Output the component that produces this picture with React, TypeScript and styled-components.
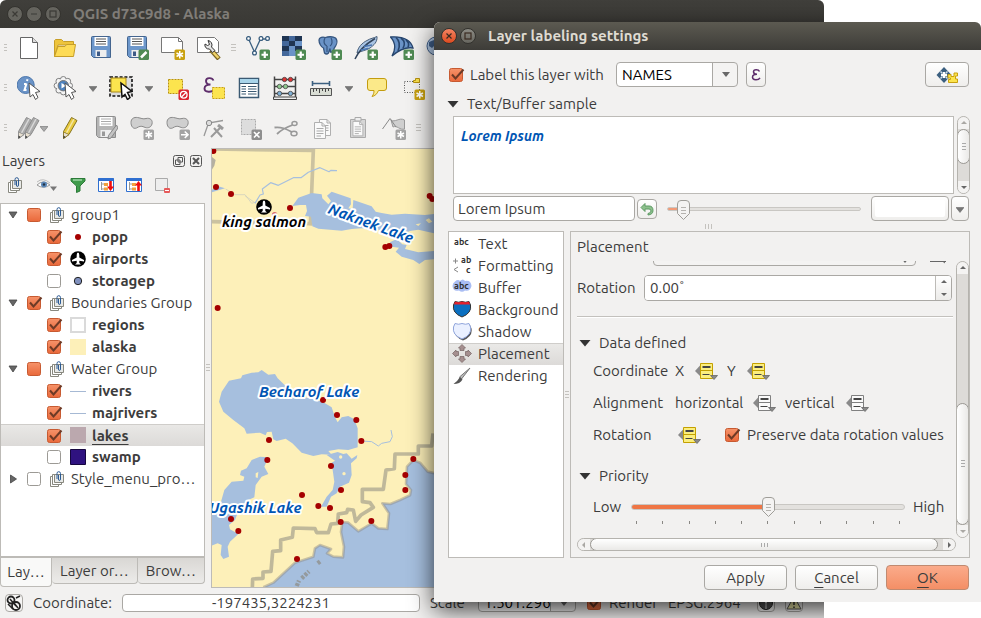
import React from "react";
import styled, { createGlobalStyle, css } from "styled-components";

const svgUrl = (body: string, w: number, h: number) =>
  `url("data:image/svg+xml,${encodeURIComponent(
    `<svg xmlns='http://www.w3.org/2000/svg' width='${w}' height='${h}' viewBox='0 0 ${w} ${h}'>${body}</svg>`
  )}")`;

const boxGradient =
  "<defs><linearGradient id='g' x2='0' y2='1'><stop offset='0' stop-color='#f6936a'/><stop offset='1' stop-color='#e9683a'/></linearGradient></defs>";
const filledBox = `${boxGradient}<rect x='1.5' y='1.5' width='13' height='13' rx='2' fill='url(#g)' stroke='#c75a31'/>`;
const emptyBox = "<rect x='1.5' y='1.5' width='13' height='13' rx='2' fill='#fff' stroke='#9c9a95'/>";
const tick = "<path d='M4 7.500 7.500 11.500 15.500 2.500' fill='none' stroke='#6d3a26' stroke-width='2'/>";
const IMG_CHECKED = svgUrl(filledBox + tick, 17, 16);
const IMG_PARTIAL = svgUrl(filledBox, 17, 16);
const IMG_EMPTY = svgUrl(emptyBox, 17, 16);
const IMG_ARROW = svgUrl("<path d='M0 0H8L4 5Z' fill='#686868'/>", 8, 5);
const IMG_THUMB = svgUrl(
  "<path d='M.5 4Q.5 .5 4 .5H9Q12.500 .5 12.500 4V13.500L6.500 19.500L.5 13.500Z' fill='#f4f3f2' stroke='#9f9d98'/><path d='M4 7.500H9M4 10.500H9M4 13.500H9' stroke='#b5b3af'/>",
  13,
  20
);

const Global = createGlobalStyle`
  * { box-sizing: border-box; }
  html, body { margin: 0; height: 100%; background: #fff; overflow: hidden; }
  body, button, input, select {
    font: 15px/20px "Ubuntu", "Noto Sans", sans-serif;
    color: #3c3c3c;
  }
  svg { display: block; flex: none; }
`;

/* ---------- windows ---------- */
const Desktop = styled.div`
  position: relative;
  height: 100vh;
  overflow: hidden;
`;
const MainWindow = styled.div`
  position: absolute;
  inset: 0 157px 0 0;
  display: flex;
  flex-direction: column;
  background: #f2f1f0;
  border-radius: 6px 6px 0 0;
  overflow: hidden;
`;
const DialogShade = styled.div`
  position: absolute;
  inset: 22px -157px 16px 434px;
  box-shadow: 0 8px 24px rgba(0, 0, 0, 0.75);
  border-radius: 6px 6px 0 0;
`;
const DialogWindow = styled.section`
  position: absolute;
  inset: 22px 0 16px 434px;
  display: flex;
  flex-direction: column;
  background: #f2f1f0;
  border-radius: 6px 6px 0 0;
  overflow: hidden;
`;
const TitleBar = styled.header<{ $active?: boolean }>`
  flex: none;
  height: 28px;
  display: flex;
  align-items: center;
  gap: 3px;
  padding-left: 7px;
  font-weight: 700;
  white-space: nowrap;
  color: ${(p) => (p.$active ? "#dfdbd2" : "#807d78")};
  background: ${(p) =>
    p.$active ? "linear-gradient(#5c5a51, #3d3c38)" : "linear-gradient(#403f3b, #393834)"};
`;
const WindowButton = styled.button<{ $tone: "close" | "focus" | "idle" }>`
  width: 16px;
  height: 16px;
  padding: 0;
  display: grid;
  place-items: center;
  border: 1px solid #33322e;
  border-radius: 50%;
  color: ${(p) => (p.$tone === "idle" ? "#3b3a36" : "#3a2a20")};
  background: ${(p) =>
    p.$tone === "close"
      ? "linear-gradient(#f48462, #dc4a1f)"
      : p.$tone === "focus"
      ? "linear-gradient(#8c8b84, #67665f)"
      : "#65645e"};
`;
const WindowTitle = styled.h1`
  margin: 0 0 0 9px;
  font-size: 15px;
  line-height: 20px;
`;
const Glyph = ({ kind }: { kind: "x" | "min" | "max" }) => (
  <svg width="8" height="8" viewBox="0 0 8 8" fill="none" stroke="currentColor" strokeWidth="1.2">
    {kind === "x" && <path d="M1.500 1.500 6.500 6.500M6.500 1.500 1.500 6.500" />}
    {kind === "min" && <path d="M1 4H7" />}
    {kind === "max" && <rect x="1" y="1" width="6" height="6" />}
  </svg>
);

/* ---------- toolbars ---------- */
const ToolRow = styled.div`
  flex: none;
  height: 40px;
  display: flex;
  align-items: center;
`;
const Grip = styled.span<{ $wide?: boolean }>`
  flex: none;
  width: ${(p) => (p.$wide ? 13 : 11)}px;
  height: 8px;
  padding: 0 4px;
  background: repeating-linear-gradient(#c4c2be 0 1px, #f2f1f0 1px 3px) content-box;
`;
const ToolButton = styled.button<{ $size?: "normal" | "split" | "arrow" }>`
  flex: none;
  width: ${(p) => (p.$size === "split" ? 41 : p.$size === "arrow" ? 20 : 36)}px;
  height: 36px;
  padding: 0;
  display: flex;
  align-items: center;
  justify-content: center;
  border: 0;
  background: none;
`;
const Ico = ({ children, size = 24 }: { children: React.ReactNode; size?: number }) => (
  <svg width={size} height={size} viewBox={`0 0 ${size} ${size}`} fill="none">
    {children}
  </svg>
);
const DownArrow = ({ color = "#777" }: { color?: string }) => (
  <svg width="8" height="8" viewBox="0 0 8 8">
    <path d="M0 2.500H8L4 7.500Z" fill={color} stroke="#5c5c5c" strokeWidth=".5" />
  </svg>
);
const Cursor = ({ dark }: { dark?: boolean }) => (
  <path
    d="M12 7 23 15.500 18.500 16.500 21 21.500 18.500 23.500 16 18.500 13 21Z"
    fill="#fff"
    stroke={dark ? "#111" : "#555"}
    strokeWidth={dark ? 1.5 : 1}
  />
);
const Badge = ({ kind, color }: { kind: "plus" | "star" | "x" | "edit" | "arrow" | "no"; color: string }) => (
  <g>
    <rect x="13.500" y="13.500" width="10.500" height="10.500" rx="1.500" fill={color} />
    <g stroke="#fff" strokeWidth="1.600">
      {kind === "plus" && <path d="M18.750 15.500V22M15.500 18.750H22" strokeWidth="2.200" />}
      {kind === "star" && (
        <path d="M18.750 15V22.500M15.500 17 22 20.500M22 17 15.500 20.500" strokeWidth="1.500" />
      )}
      {kind === "x" && <path d="M16 16 21.500 21.500M21.500 16 16 21.500" />}
      {kind === "edit" && <path d="M16 21.500 21.500 16" strokeWidth="2.500" />}
      {kind === "arrow" && <path d="M15 18.750H21.500M18.750 15.500 22 18.750 18.750 22" />}
      {kind === "no" && (
        <>
          <circle cx="18.750" cy="18.750" r="3.300" strokeWidth="1.300" />
          <path d="M16.500 21 21 16.500" strokeWidth="1.300" />
        </>
      )}
    </g>
  </g>
);
const GREEN = "#4f8a53";
const GOLD = "#c9a10f";
const GREY = "#a3a3a3";
const Floppy = ({ grey }: { grey?: boolean }) => (
  <g>
    <path
      d="M2.500 1.500Q2.500.5 3.500.5H20.500Q21.500.5 21.500 1.500V21.500H4.500L2.500 19.500Z"
      fill={grey ? "#b5b5b5" : "#6d97cb"}
      stroke={grey ? "#8e8e8e" : "#44658f"}
    />
    <path d="M5.500 1H18.500V10H5.500Z" fill="#fff" />
    <path d="M7 3H17M7 5.500H17M7 8H17" stroke={grey ? "#aaa" : "#555"} />
    <path d="M6.500 14H17.500V21H6.500Z" fill="#eee" />
    <path d="M8 15.500H11V20H8Z" fill={grey ? "#999" : "#3d5a86"} />
  </g>
);
const Blob = () => (
  <path
    d="M1 6.500C1 2.500 4 1 7.500 1.500C11 2 13 3.500 16 2.500C20 1.500 23 4 22 8C21 12 17 12.500 14 11C11 9.500 9 10.500 6.500 12C3 13.500 1 10 1 6.500Z"
    fill="#cfcfcf"
    stroke="#8a8a8a"
  />
);
const Pencil = ({ fill, edge, dx = 0 }: { fill: string; edge: string; dx?: number }) => (
  <g transform={`translate(${dx} 0)`}>
    <path d="M13.500 1.500 19 4.500 11 18.500 5.500 22.500 5.500 15.500Z" fill={fill} stroke={edge} />
    <path d="M16 3 8.500 17" stroke="#fff" strokeOpacity=".55" strokeWidth="1.500" />
    <path d="M5.500 16 11 18.500 5.500 22.500Z" fill="#e8e0d0" stroke={edge} strokeWidth=".8" />
    <path d="M5.500 19.500 7.500 21 5.500 22.500Z" fill="#333" />
  </g>
);
const Sheet = ({ x = 0, y = 0 }: { x?: number; y?: number }) => (
  <g transform={`translate(${x} ${y})`}>
    <path d="M.5.5H8L11.500 4V16.500H.5Z" fill="#fafafa" stroke="#b0b0b0" />
    <path d="M8 .5V4H11.500M2.500 6.500H9.500M2.500 9H9.500M2.500 11.500H9.500M2.500 14H7" stroke="#aaa" />
  </g>
);

type Tool = { name: string; art: React.ReactNode };
const row1a: Tool[] = [
  { name: "New", art: <><path d="M3.500 1.500H15.500L20.500 6.500V22.500H3.500Z" fill="#fff" stroke="#666" /><path d="M15.500 1.500V6.500H20.500" fill="#ddd" stroke="#666" /></> },
  { name: "Open", art: <><path d="M1.500 20.500V4.500L2.500 3.500H8.500L10.500 5.500H20.500V9H5Z" fill="#eec43c" stroke="#c79e28" /><path d="M1.500 20.500 5 10.500H12L13.500 8.500H22.500L20.500 20.500Z" fill="#fddb56" stroke="#c79e28" /></> },
  { name: "Save", art: <Floppy /> },
  { name: "Save As", art: <><Floppy /><Badge kind="edit" color={GREEN} /></> },
  { name: "New Print Composer", art: <><path d="M.5 1.500H17.500L21.500 5.500V16.500H.5Z" fill="#fff" stroke="#777" /><path d="M17.500 1.500V5.500H21.500" stroke="#777" /><Badge kind="star" color={GOLD} /></> },
  { name: "Composer Manager", art: <><path d="M.5 1.500H17.500L21.500 5.500V16.500H.5Z" fill="#fff" stroke="#777" /><path d="M14 14 22 23" stroke="#7a6420" strokeWidth="4.500" /><path d="M15 15 21.500 22" stroke="#f0d268" strokeWidth="2.500" /><path d="M8 8A4 4 0 0 0 12.500 13L15.500 16.500L18 14.500L14.500 11A4.500 4.500 0 0 0 11 4.500L12.500 8.500L10.500 9.500Z" fill="#e5e5e5" stroke="#333" /></> },
];
const row1b: Tool[] = [
  { name: "Add Vector Layer", art: <><path d="M3 4 8.500 16 14.500 3H21" stroke="#3c6080" strokeWidth="1.300" />{[[2.500, 2.500], [8.500, 17], [15, 2.500], [21.500, 2.500]].map(([x, y]) => <circle key={x} cx={x} cy={y} r="1.900" fill="#fff" stroke="#3c6080" strokeWidth="1.300" />)}<Badge kind="plus" color={GREEN} /></> },
  { name: "Add Raster Layer", art: <><path d="M0 0H20V20H0Z" fill="#6a93c7" /><path d="M0 0H7V5H0ZM13 0H20V5H13ZM7 5H13V10H7ZM0 10H7V15H0ZM13 10H20V15H13Z" fill="#1f3553" /><path d="M7 0H13V5H7ZM0 5H7V10H0ZM0 15H7V20H0Z" fill="#44689b" /><Badge kind="plus" color={GREEN} /></> },
  { name: "Add PostGIS Layer", art: <><path d="M1 4C1 1 5 .7 7.500 1.500C10 .5 15 .3 17.500 2C20.500 5 18 10 16 12.500L15.500 16H12.500L12 12.500L10.500 17Q8.500 19 6.500 17L5.500 12C3 11 1 7 1 4Z" fill="#6a93c7" stroke="#35557f" strokeWidth="1.300" /><path d="M7 2C5 5 6 9 9 10M13 2C15 5 14 9 12 10M9 10V16" stroke="#35557f" strokeWidth="1.200" /><Badge kind="plus" color={GREEN} /></> },
  { name: "Add SpatiaLite Layer", art: <><path d="M3 17C4 11 8 7 13 4.500C16 2.500 20 2 23 .5C23.500 6 20 9 16 12C12 14.500 7 15 3 17Z" fill="#a9c4e4" stroke="#4a5f78" /><path d="M1 23C5 14 12 8 21 2.500" stroke="#31445c" strokeWidth="1.500" /><path d="M7 14 14 12.500M10 10.500 18 9" stroke="#4a77b4" strokeWidth="1.500" /><Badge kind="plus" color={GREEN} /></> },
  { name: "Add MSSQL Layer", art: <><path d="M.5 1C8 .5 20 1 23 12C17 11 9 14 2 20C6 13 6 7 .5 1Z" fill="#6a93c7" stroke="#27456d" strokeWidth="1.300" /><path d="M6 1.500C10 5 10 10 8 15M11 2C15 5 15 9 13 12.500M16 4C19 6 19 9 18 11.500" stroke="#27456d" strokeWidth="1.600" /><Badge kind="plus" color={GREEN} /></> },
  { name: "Add WMS Layer", art: <><circle cx="10" cy="10" r="9" fill="#b3cbe8" stroke="#41618c" /><path d="M3 6 8 4 10 8 6 12 3 10ZM12 12 16 10 15 16Z" fill="#41618c" /></> },
];
const gearLobes = Array.from({ length: 8 }, (_, i) => {
  const a = (i * Math.PI) / 4;
  return { x: 10.3 + 6.3 * Math.cos(a), y: 9.7 + 6.3 * Math.sin(a) };
});
const identify: Tool = { name: "Identify Features", art: <><circle cx="8.700" cy="9" r="8.500" fill="#6a93c7" stroke="#4e78ad" /><path d="M10.500 3.200 10 5M9.500 7.500 7.500 14H9.500M7 8H9.500" stroke="#fff" strokeWidth="2" /><Cursor /></> };
const runAction: Tool = { name: "Run Feature Action", art: <>{gearLobes.map((l, i) => <circle key={i} cx={l.x} cy={l.y} r="2.900" fill="#f4f4f4" stroke="#808080" />)}<circle cx="10.300" cy="9.700" r="7" fill="#f4f4f4" /><circle cx="10.300" cy="9.700" r="5.200" fill="#4e82bd" stroke="#777" /><path d="M8.500 7 13 9.700 8.500 12.500Z" fill="#fff" /><Cursor /></> };
const select: Tool = { name: "Select Features", art: <><path d="M1 1H23V20H1Z" fill="#ddd" stroke="#111" strokeWidth="1.600" strokeDasharray="3 1.800" /><path d="M2 2H17V16H2Z" fill="#fce44e" stroke="#a9891a" /><Cursor dark /></> };
const row2: Tool[] = [
  { name: "Deselect Features", art: <><path d="M3.500 3.500H17.500V17.500H3.500Z" fill="#fce44e" stroke="#b8920e" strokeDasharray="2 1" /><Badge kind="no" color="#d8232f" /></> },
  { name: "Select by Expression", art: <><path d="M12.500 4.500C11 1 5 1.500 5 5C5 7.500 7 8.500 9.500 8.500C6 8.500 3.500 10 3.500 12.500C3.500 16.500 11 17 13.500 13" stroke="#5e2d6b" strokeWidth="1.900" /><path d="M11.500 11.500H23.500V22.500H11.500Z" fill="#fce44e" stroke="#c9a10f" strokeDasharray="2 1" /></> },
  { name: "Open Attribute Table", art: <><path d="M2.500 2.500H21.500V21.500H2.500Z" fill="#fff" stroke="#3b5a73" strokeWidth="1.500" /><path d="M3 3H21V7H3Z" fill="#a8d4ea" /><path d="M3 7.500H21" stroke="#3b5a73" /><path d="M4.500 10.500H9M11 10.500H19.500M4.500 13H9M11 13H19.500M4.500 15.500H9M11 15.500H19.500M4.500 18H9M11 18H19.500" stroke="#3b5a73" strokeWidth="1.200" /></> },
  { name: "Field Calculator", art: <><path d="M1.500 .5V21M22.500 .5V21M1 3.500H23M1 10.500H23M1 17.500H23" stroke="#444" strokeWidth="1.500" /><path d="M.5 21H23.500V23.500H.5Z" fill="#eee" stroke="#444" />{[[11.500, 3.500, "#d33"], [17.500, 3.500, "#d33"], [6.500, 10.500, "#8fca8f"], [12.500, 10.500, "#8fca8f"], [6.500, 17.500, "#7fb0d6"], [17.500, 17.500, "#7fb0d6"]].map(([x, y, c]) => <circle key={`${x}-${y}`} cx={x} cy={y} r="2.200" fill={String(c)} stroke="#444" strokeWidth=".8" />)}</> },
  { name: "Measure Line", art: <><path d="M3.500 5V10M20.500 5V10M3.500 7.500H20.500" stroke="#3c6080" strokeWidth="1.600" /><path d="M1.500 12.500H22.500V19.500H1.500Z" fill="#d9ddd4" stroke="#555" /><path d="M4.500 13V16M7.500 13V15M10.500 13V17M13.500 13V15M16.500 13V16M19.500 13V15" stroke="#444" /></> },
];
const row2b: Tool[] = [
  { name: "Map Tips", art: <path d="M5 2.500H19Q21.500 2.500 21.500 5V12Q21.500 14.500 19 14.500H13.500C12 18 10 20 7 20.500C8.500 18.500 9 17 9 14.500H5Q2.500 14.500 2.500 12V5Q2.500 2.500 5 2.500Z" fill="#fbe989" stroke="#c39c0e" /> },
  { name: "Text Annotation", art: <><path d="M3.500 5.500H18.500V16.500H3.500Z" stroke="#555" strokeDasharray="1 1.500" /><path d="M12.500 4.500H14.500V2.500H18.500V6.500H12.500Z" fill="#fce44e" stroke="#b8920e" /><Badge kind="star" color={GOLD} /></> },
];
const row3: Tool[] = [
  { name: "Toggle Editing", art: <Pencil fill="#e7c93d" edge="#86731f" /> },
  { name: "Save Layer Edits", art: <><Floppy grey /><path d="M22.500 9 24 12 17 22 14 23 14.500 19.500Z" fill="#c4c4c4" stroke="#888" /></> },
  { name: "Add Feature", art: <><Blob /><Badge kind="star" color={GREY} /></> },
  { name: "Move Feature", art: <><Blob /><Badge kind="arrow" color={GREY} /></> },
  { name: "Node Tool", art: <><path d="M2 20 6.500 7 21 4.500" stroke="#999" strokeWidth="1.300" /><circle cx="7" cy="7" r="2.700" fill="#ddd" stroke="#888" /><path d="M12 12 20 21M18 12 9 21" stroke="#9a9a9a" strokeWidth="2" /><path d="M16 9 21 13" stroke="#9a9a9a" strokeWidth="3" /></> },
  { name: "Delete Selected", art: <><path d="M3.500 3.500H17.500V18.500H3.500Z" fill="#ddd" stroke="#aaa" strokeDasharray="2 1" /><Badge kind="x" color="#8f8f8f" /></> },
  { name: "Cut Features", art: <><path d="M.5 11.500C7 10.500 12 13 18 16M3 18C8 13 13 11 18.500 9" stroke="#999" strokeWidth="1.800" /><ellipse cx="20.500" cy="7.500" rx="2.500" ry="2" stroke="#999" strokeWidth="1.500" /><ellipse cx="20" cy="17.500" rx="3" ry="2.300" stroke="#999" strokeWidth="1.500" /></> },
  { name: "Copy Features", art: <><Sheet x={9} y={3} /><Sheet x={4} y={6} /></> },
  { name: "Paste Features", art: <><path d="M4.500 3.500H19.500V21.500H4.500Z" fill="#d6d6d6" stroke="#aaa" /><path d="M9 1.500H15V5H9Z" fill="#eee" stroke="#aaa" /><g transform="translate(6.500 5) scale(.9)"><Sheet /></g></> },
  { name: "Advanced Digitizing", art: <><path d="M9 4C13 7 17 1 22.500 4V13C18 14.500 15 9 11 11Z" fill="#cfcfcf" stroke="#999" /><path d="M.5 13 8 2.500 14 11" stroke="#888" /><Badge kind="star" color={GREY} /></> },
];
const Tools = ({ items }: { items: Tool[] }) => (
  <>
    {items.map((t) => (
      <ToolButton key={t.name} aria-label={t.name}>
        <Ico>{t.art}</Ico>
      </ToolButton>
    ))}
  </>
);
const MenuArrow = ({ label }: { label: string }) => (
  <ToolButton $size="arrow" aria-label={label}>
    <DownArrow />
  </ToolButton>
);

/* ---------- layer dock ---------- */
const Workspace = styled.div`
  flex: 1;
  min-height: 0;
  display: flex;
`;
const Dock = styled.aside`
  flex: none;
  width: 205px;
  display: flex;
  flex-direction: column;
`;
const DockTitle = styled.div`
  height: 25px;
  display: flex;
  align-items: center;
  gap: 5px;
  padding: 0 3px 0 2px;
`;
const DockName = styled.h2`
  flex: 1;
  margin: 0;
  font-size: 15px;
  font-weight: 400;
`;
const TinyButton = styled.button`
  width: 12px;
  height: 12px;
  padding: 0;
  border: 0;
  background: none;
`;
const DockTools = styled.div`
  height: 30px;
  display: flex;
  align-items: flex-start;
  padding: 2px 0 0 1px;
`;
const DockTool = styled.button<{ $menu?: boolean }>`
  width: ${(p) => (p.$menu ? 35 : 28)}px;
  height: 20px;
  padding: 0;
  display: flex;
  align-items: center;
  justify-content: center;
  border: 0;
  background: none;
`;
const Tree = styled.ul`
  flex: 1;
  margin: 0;
  padding: 0;
  list-style: none;
  background: #fff;
  border: 1px solid #bdbbb7;
  border-bottom-width: 2px;
`;
const TreeRow = styled.li<{ $child?: boolean; $current?: boolean }>`
  height: 22px;
  display: flex;
  align-items: center;
  gap: 6px;
  padding-left: ${(p) => (p.$child ? 45 : 5)}px;
  font-weight: ${(p) => (p.$child ? 700 : 400)};
  white-space: nowrap;
  ${(p) =>
    p.$current &&
    css`
      background: linear-gradient(#e9e8e6, #dcdad8);
      border-top: 1px solid #cfcdca;
      text-decoration: underline;
      text-underline-offset: 3px;
    `}
`;
const Expander = styled.button`
  width: 14px;
  height: 14px;
  padding: 0;
  display: grid;
  place-items: center;
  border: 0;
  background: none;
`;
const CheckLabel = styled.label`
  display: flex;
  align-items: center;
  gap: 6px;
`;
const Check = styled.input.attrs({ type: "checkbox" })<{ $partial?: boolean }>`
  appearance: none;
  flex: none;
  width: 17px;
  height: 16px;
  margin: 0;
  background: ${(p) => (p.$partial ? IMG_PARTIAL : IMG_EMPTY)} no-repeat;
  &:checked {
    background-image: ${IMG_CHECKED};
  }
`;
const GroupIcon = () => (
  <Ico size={16}>
    <path d="M1.500 5.500H9.500V15.500H1.500Z" fill="#fff" stroke="#88887f" />
    <path d="M3.500 3.500H12.500V13.500H3.500Z" fill="#fff" stroke="#88887f" />
    <path d="M5.500 3.500H14.500V11.500H5.500Z" fill="#e8e9e6" stroke="#88887f" />
    <path d="M8 8V2.500Q8 .7 9.700 .7Q11.500 .7 11.500 2.500V8Q11.500 9.500 10.200 9.500Q9.500 9.500 9.500 8V4" stroke="#2c5b94" />
  </Ico>
);
const AirportArt = () => (
  <>
    <circle cx="8" cy="8" r="7.800" fill="#000" />
    <path d="M8 1.500Q9.300 1.500 9.300 4V6.500L14 9V10.500L9.300 9.800V12L11 13.500H5L6.700 12V9.800L2 10.500V9L6.700 6.500V4Q6.700 1.500 8 1.500Z" fill="#fff" />
  </>
);
type Layer = { label: string; child?: boolean; state: "on" | "off" | "partial"; art?: React.ReactNode; closed?: boolean; current?: boolean };
const layers: Layer[] = [
  { label: "group1", state: "partial" },
  { label: "popp", child: true, state: "on", art: <circle cx="9" cy="8" r="3" fill="#a50000" /> },
  { label: "airports", child: true, state: "on", art: <g transform="translate(1 0)"><AirportArt /></g> },
  { label: "storagep", child: true, state: "off", art: <circle cx="9" cy="8" r="3.700" fill="#8090bd" stroke="#222" /> },
  { label: "Boundaries Group", state: "on" },
  { label: "regions", child: true, state: "on", art: <path d="M2 1H16V15H2Z" fill="#fff" stroke="#dadada" strokeWidth="2" /> },
  { label: "alaska", child: true, state: "on", art: <path d="M1 0H17V16H1Z" fill="#fdf0b9" /> },
  { label: "Water Group", state: "partial" },
  { label: "rivers", child: true, state: "on", art: <path d="M1 8.500H17" stroke="#a6b9d4" /> },
  { label: "majrivers", child: true, state: "on", art: <path d="M1 8.500H17" stroke="#a6b9d4" /> },
  { label: "lakes", child: true, state: "on", current: true, art: <path d="M1 0H17V16H1Z" fill="#bba8ae" /> },
  { label: "swamp", child: true, state: "off", art: <path d="M1.500 .5H16.500V15.500H1.500Z" fill="#2f1280" stroke="#16063f" /> },
  { label: "Style_menu_pro…", state: "off", closed: true },
];
const Tabs = styled.div`
  flex: none;
  height: 30px;
  display: flex;
  align-items: flex-start;
`;
const Tab = styled.button<{ $active?: boolean }>`
  flex: ${(p) => (p.$active ? "0 0 52px" : "1 1 auto")};
  height: ${(p) => (p.$active ? 29 : 26)}px;
  padding: 0 6px;
  border: 1px solid #bdbbb7;
  border-top: 0;
  border-left-width: ${(p) => (p.$active ? 1 : 0)}px;
  border-radius: 0 0 4px 4px;
  background: ${(p) => (p.$active ? "#f9f9f8" : "linear-gradient(#d9d7d4, #ecebe9)")};
  white-space: nowrap;
`;
const SideGrip = styled.div`
  flex: none;
  width: 6px;
  display: grid;
  align-items: center;
  &::before {
    content: "";
    height: 8px;
    margin: 0 1px;
    background: repeating-linear-gradient(#c4c2be 0 1px, transparent 1px 3px);
  }
`;

/* ---------- map ---------- */
const MapView = styled.main`
  flex: 1;
  min-width: 0;
  border: 1px solid #bdbbb7;
  background: #fdf0b9;
  overflow: hidden;
  & > svg {
    width: 100%;
    height: 100%;
  }
`;
const MapLabel = styled.text<{ $black?: boolean }>`
  font: italic 700 15px "Ubuntu", "Noto Sans", sans-serif;
  fill: ${(p) => (p.$black ? "#000" : "#0055b3")};
  stroke: #fff;
  stroke-width: 4px;
  stroke-linejoin: round;
  paint-order: stroke;
`;
const WATER = "#a6bfde";
const LINE = "#8d8a82";
const northDots = [[25, 18], [33, 126], [78, 147], [255, 189], [541, 306], [553, 303], [674, 153], [682, 162], [38, 489]];
const southDots = [[354, 120], [396, 165], [454, 180], [469, 243], [192, 240], [187, 300], [378, 318], [408, 390], [291, 405], [340, 438], [375, 444], [407, 486], [499, 483], [601, 390], [601, 345], [625, 297], [78, 477], [100, 513], [276, 597]];
const Dots = ({ at }: { at: number[][] }) => (
  <>
    {at.map(([x, y]) => (
      <circle key={`${x}-${y}`} cx={x} cy={y} r="9" fill="#a50000" />
    ))}
  </>
);
const COAST =
  "M175 682 205 668 270 608 325 590 330 565 345 555 378 567 366 580 385 590 414 592 417 560 408 516 412 486 430 488 460 514 500 490 520 505 547 507 552 460 532 430 556 432 585 420 615 406 618 390 603 372 606 320 625 300 645 308 668 335 690 340";
const MapArt = () => (
  <svg viewBox="212 149 611 438" preserveAspectRatio="xMinYMin slice" role="img" aria-label="Map of Alaska lakes">
    <g transform="translate(205 145) scale(.33333)">
      <path d="M20 12 325 16 316 242M20 230 320 236" stroke={LINE} strokeOpacity=".45" strokeWidth="11" fill="none" />
      <path d="M20 35 32 45 28 62 20 75Z" fill="#b5b0a0" />
      <path d="M20 135 35 122 60 130 40 136 20 142Z" fill={WATER} />
      <path d="M62 132 90 149 120 149 140 175 150 172M120 152 148 172" stroke="#c8ccc0" strokeWidth="2" fill="none" />
      <path d="M150 175 165 150 175 147 172 132 197 113 220 121 265 98 288 98 310 82 345 68 372 80 378 76 396 77" stroke={WATER} strokeWidth="3.500" fill="none" strokeLinejoin="round" />
      <path d="M262 183 280 158 320 144 350 148 352 160 370 178 378 168 366 152 380 140 437 160 438 178 430 190 443 192 445 165 500 184 512 200 530 204 560 209 600 206 660 210 687 207V265L640 254 615 258 600 265 560 258 470 250 440 252 410 257 340 251 322 244 318 215 300 213 306 198 303 180 285 180Z" fill={WATER} />
      <path d="M555 292 575 282 592 298 605 300 600 312 640 322 687 318V343L660 345 643 357 625 345 590 335 572 320 582 308 560 305Z" fill={WATER} />
      <path d="M632 238 648 235 640 243ZM662 225 672 220 682 230 672 235Z" fill="#fdf0b9" />
      <Dots at={northDots} />
      <circle cx="209" cy="209" r="8" fill="#d8696a" />
    </g>
    <g transform="translate(205 360) scale(.33333)">
      <path d="M42 125 50 95 72 62 108 55 112 46 140 38 160 37 170 30 190 44 210 42 218 55 232 68 262 98 300 112 350 124 380 142 390 172 398 187 410 172 430 168 448 178 458 205 458 262 430 270 400 268 370 273 380 284 350 283 325 288 290 278 262 250 242 236 215 243 205 238 200 215 186 216 182 226 165 218 125 221 118 205 85 180 55 155Z" fill={WATER} />
      <path d="M365 285 398 276 415 282 425 280 440 296 457 285 455 295 438 310 440 345 432 368 405 380 395 400 378 410 365 440 348 440 365 410 383 390 388 365 383 330 380 308 390 302Z" fill={WATER} />
      <circle cx="407" cy="291" r="5" fill="#fdf0b9" />
      <circle cx="417" cy="341" r="5" fill="#fdf0b9" />
      <path d="M105 345 108 332 125 325 140 300 165 290 190 292 178 320 190 342 170 350 152 375 148 412 130 420 105 440 90 480 72 495 75 508 100 522 75 545 68 560 72 590 55 597 47 585 50 555 38 550 20 557V430L48 425 58 390 80 365 115 362 118 350Z" fill={WATER} />
      <path d="M152 340 160 336 158 354 152 352Z" fill="#fdf0b9" />
      <path d="M469 243 500 245 520 258 530 250 555 245 562 230 558 210" stroke={WATER} strokeWidth="3" fill="none" />
      <path d={`${COAST} 1857 340 1857 690 175 690Z`} fill={WATER} />
      <path d={COAST} stroke={LINE} strokeOpacity=".45" strokeWidth="8" fill="none" strokeLinejoin="round" />
      <path d="M275 678 282 662M290 655 312 634M338 610 346 604" stroke={LINE} strokeOpacity=".7" strokeWidth="13" strokeDasharray="9 4" fill="none" />
      <path d="M142 684 143 657 174 655 174 636 198 634 203 574 227 572 227 540 262 532 265 504 330 506 335 518 370 518 378 492 398 490 400 462 425 458 428 448 445 450 452 484 468 465 505 442 495 428 472 425 472 388 535 388 543 330 568 326 570 282 640 282 640 258 680 258 684 220" stroke={LINE} strokeOpacity=".55" strokeWidth="11" fill="none" strokeLinejoin="round" />
      <Dots at={southDots} />
    </g>
    <g transform="translate(256 199)">
      <AirportArt />
    </g>
    <MapLabel $black x="222" y="227">king salmon</MapLabel>
    <MapLabel x="327" y="213" transform="rotate(20 327 213)">Naknek Lake</MapLabel>
    <MapLabel x="259" y="397">Becharof Lake</MapLabel>
    <MapLabel x="209" y="513">Ugashik Lake</MapLabel>
  </svg>
);

/* ---------- status bar ---------- */
const StatusBar = styled.footer`
  flex: none;
  height: 30px;
  display: flex;
  align-items: center;
  gap: 10px;
  padding-left: 5px;
  white-space: nowrap;
`;
const StatusLabel = styled.label`
  flex: none;
  width: 79px;
`;
const ScaleLabel = styled.label`
  flex: none;
  width: 38px;
`;
const StatusButton = styled.button`
  flex: none;
  width: 18px;
  height: 18px;
  padding: 0;
  display: grid;
  place-items: center;
  border: 1px solid #aaa8a4;
  border-radius: 4px;
  background: #f6f5f4;
`;
const field = css`
  border: 1px solid #aaa8a4;
  border-radius: 4px;
  background-color: #fff;
  min-width: 0;
  outline: 0;
`;
const CoordInput = styled.input`
  ${field}
  flex: none;
  width: 298px;
  height: 18px;
  padding: 0;
  text-align: center;
`;
const Combo = styled.select<{ $w: number; $h: number }>`
  ${field}
  appearance: none;
  flex: none;
  width: ${(p) => p.$w}px;
  height: ${(p) => p.$h}px;
  padding: 0 24px 0 5px;
  line-height: ${(p) => p.$h - 2}px;
  color: #000;
  background: ${IMG_ARROW} no-repeat right 7px center,
    linear-gradient(90deg, #aaa8a4 0 1px, #f4f3f2 1px) no-repeat right / 25px 100%, #fff;
`;

/* ---------- dialog ---------- */
const DialogBody = styled.form`
  flex: 1;
  min-height: 0;
  display: flex;
  flex-direction: column;
  padding: 12px 11px 12px 14px;
`;
const TopRow = styled.div`
  display: flex;
  align-items: center;
  height: 25px;
  gap: 8px;
  padding-right: 1px;
`;
const EnableLabel = styled(CheckLabel)`
  width: 160px;
  gap: 5px;
  white-space: nowrap;
`;
const Spacer = styled.span`
  flex: 1;
`;
const PushButton = styled.button<{ $w: number; $h?: number; $primary?: boolean }>`
  flex: none;
  width: ${(p) => p.$w}px;
  height: ${(p) => p.$h ?? 25}px;
  padding: 0;
  display: flex;
  align-items: center;
  justify-content: center;
  border: 1px solid ${(p) => (p.$primary ? "#c08a70" : "#aaa8a4")};
  border-radius: 4px;
  background: ${(p) =>
    p.$primary ? "linear-gradient(#fbab8b, #f48f66)" : "linear-gradient(#fff, #efeeec)"};
`;
const Heading = styled.button<{ $space?: boolean }>`
  flex: none;
  height: 22px;
  margin: ${(p) => (p.$space ? "14px 0 1px 2px" : "6px 0 1px -1px")};
  padding: 0;
  display: flex;
  align-items: center;
  gap: 8px;
  border: 0;
  background: none;
  text-align: left;
`;
const SampleRow = styled.div`
  flex: none;
  height: 78px;
  display: flex;
  gap: 3px;
  padding-left: 5px;
`;
const Sample = styled.div`
  flex: 1;
  padding: 9px 7px;
  border: 1px solid #bdbbb7;
  background: #fff;
  color: #0055b3;
  font-size: 14px;
  font-weight: 700;
  font-style: italic;
`;
const SampleControls = styled.div`
  flex: none;
  display: flex;
  align-items: center;
  gap: 2px;
  margin-top: 2px;
  padding: 0 1px 0 5px;
`;
const SampleInput = styled.input`
  ${field}
  width: 182px;
  height: 25px;
  padding: 0 4px;
`;
const SliderHolder = styled.div`
  flex: 1;
  min-width: 0;
  padding: 0 8px;
`;
const Slider = styled.input.attrs({ type: "range" })<{ $fill: number; $soft?: boolean }>`
  appearance: none;
  display: block;
  width: 100%;
  height: 20px;
  margin: 0;
  background: none;
  &::-webkit-slider-runnable-track {
    height: ${(p) => (p.$soft ? 4 : 6)}px;
    border: 1px solid #c9c7c3;
    border-radius: 3px;
    background: linear-gradient(
      90deg,
      ${(p) => (p.$soft ? "#f29a76" : "#ef7645")} ${(p) => p.$fill}%,
      #e3e1de ${(p) => p.$fill}%
    );
  }
  &::-webkit-slider-thumb {
    appearance: none;
    width: 13px;
    height: 20px;
    margin-top: -8px;
    background: ${IMG_THUMB} no-repeat;
  }
`;
const Swatch = styled.span`
  width: 70px;
  height: 17px;
  border-radius: 2px;
  background: #fff;
`;
const Splitter = styled.div`
  flex: none;
  height: 10px;
  display: grid;
  justify-items: center;
  align-items: center;
  &::before {
    content: "";
    width: 8px;
    height: 5px;
    background: repeating-linear-gradient(90deg, #c4c2be 0 1px, transparent 1px 3px);
  }
`;
const Split = styled.div`
  flex: 1;
  min-height: 0;
  display: flex;
`;
const PageList = styled.ul`
  flex: none;
  width: 116px;
  margin: 0;
  padding: 1px 0;
  list-style: none;
  background: #fff;
  border: 1px solid #bdbbb7;
`;
const PageItem = styled.li<{ $current?: boolean }>`
  height: 22px;
  display: flex;
  align-items: center;
  gap: 6px;
  padding-left: 3px;
  white-space: nowrap;
  ${(p) =>
    p.$current &&
    css`
      background: linear-gradient(#cfcdca 1px, #eae9e7 1px, #dcdad8);
    `}
`;
const Mini = styled.text`
  font: 700 9px/9px "Ubuntu", "Noto Sans", sans-serif;
  fill: #333;
`;
const Panel = styled.div`
  flex: 1;
  min-width: 0;
  display: flex;
  flex-direction: column;
  padding: 0 0 6px 6px;
  border: 1px solid #bdbbb7;
`;
const PanelTitle = styled.h2`
  flex: none;
  margin: 0;
  padding: 5px 0 4px;
  font-size: 15px;
  font-weight: 400;
`;
const ScrollArea = styled.div`
  flex: 1;
  min-height: 0;
  display: grid;
  grid-template: minmax(0, 1fr) 13px / minmax(0, 1fr) 13px;
`;
const Viewport = styled.div`
  overflow: hidden;
  padding-right: 3px;
`;
const Scrolled = styled.div`
  margin-top: -20px;
  display: flex;
  flex-direction: column;
`;
const ClippedRow = styled.div`
  display: flex;
  align-items: flex-end;
  justify-content: space-between;
  height: 25px;
  padding: 0 5px 0 76px;
`;
const WideCombo = styled.select`
  ${field}
  appearance: none;
  flex: 1;
  height: 25px;
  margin-right: 14px;
  background: ${IMG_ARROW} no-repeat right 6px bottom 2px, #f4f3f2;
`;
const FieldRow = styled.div`
  display: flex;
  align-items: center;
  gap: 8px;
  margin-top: 9px;
  padding-right: 1px;
`;
const FieldLabel = styled.label`
  flex: none;
  min-width: 59px;
`;
const SpinBox = styled.div`
  ${field}
  flex: 1;
  height: 26px;
  display: flex;
  overflow: hidden;
`;
const SpinInput = styled.input`
  flex: 1;
  min-width: 0;
  border: 0;
  padding: 0 5px;
  outline: 0;
`;
const SpinButtons = styled.div`
  width: 16px;
  display: flex;
  flex-direction: column;
  border-left: 1px solid #bdbbb7;
  background: linear-gradient(#fff, #ecebe9);
`;
const SpinButton = styled.button`
  flex: 1;
  padding: 0;
  display: grid;
  place-items: center;
  border: 0;
  background: none;
`;
const Rule = styled.hr`
  width: 100%;
  height: 2px;
  margin: 15px 0 0;
  border: 0;
  border-top: 1px solid #c3c1bd;
  border-bottom: 1px solid #fff;
`;
const OptionRow = styled.div`
  height: 32px;
  display: flex;
  align-items: center;
  gap: 8px;
  padding-left: 16px;
  white-space: nowrap;
`;
const SliderRow = styled(OptionRow)`
  height: 28px;
  margin-top: 5px;
`;
const Cell = styled.span<{ $w: number }>`
  flex: none;
  width: ${(p) => p.$w}px;
`;
const DefineButton = styled.button`
  width: 25px;
  height: 20px;
  padding: 0;
  display: grid;
  place-items: center;
  border: 0;
  background: none;
`;
const SliderCell = styled.div`
  flex: 1;
  min-width: 0;
`;
const Ticks = styled.div`
  height: 4px;
  display: flex;
  justify-content: space-between;
  margin: 0 53px 0 59px;
`;
const Tick = styled.span`
  width: 1px;
  height: 3px;
  background: #8a8884;
`;
const Buttons = styled.div`
  flex: none;
  display: flex;
  justify-content: flex-end;
  gap: 8px;
  margin-top: 7px;
  padding-right: 1px;
`;
const Mnemonic = styled.u`
  text-underline-offset: 4px;
`;

const Bar = styled.div<{ $h?: boolean }>`
  min-width: 13px;
  min-height: 13px;
  display: flex;
  flex-direction: ${(p) => (p.$h ? "row" : "column")};
  border: 1px solid #b5b3ae;
  border-radius: 7px;
  background: #dddbd8;
  overflow: hidden;
`;
const BarButton = styled.button`
  flex: 0 0 12px;
  min-width: 11px;
  padding: 0;
  display: grid;
  place-items: center;
  border: 0;
  background: #f4f3f2;
`;
const BarSpace = styled.span<{ $n: number }>`
  flex: ${(p) => p.$n} 0 0;
`;
const BarThumb = styled.span<{ $n: number; $h?: boolean }>`
  flex: ${(p) => p.$n} 0 0;
  margin: ${(p) => (p.$h ? "-1px 0" : "0 -1px")};
  display: grid;
  place-items: center;
  border: 1px solid #9a9893;
  border-radius: 7px;
  background: linear-gradient(${(p) => (p.$h ? "180deg" : "90deg")}, #fff, #eae9e7);
  &::before {
    content: "";
    width: ${(p) => (p.$h ? 7 : 4)}px;
    height: ${(p) => (p.$h ? 4 : 7)}px;
    background: repeating-linear-gradient(${(p) => (p.$h ? "90deg" : "180deg")}, #aaa 0 1px, transparent 1px 3px);
  }
`;
const arrows = { up: "M0 4H6L3 1Z", down: "M0 2H6L3 5Z", left: "M4 0V6L1 3Z", right: "M2 0V6L5 3Z" };
const BarArrow = ({ dir, dim }: { dir: keyof typeof arrows; dim?: boolean }) => (
  <svg width="6" height="6" viewBox="0 0 6 6">
    <path d={arrows[dir]} fill={dim ? "#aaa8a4" : "#666"} />
  </svg>
);
type BarProps = { before: number; thumb: number; after: number; h?: boolean; atEnd?: boolean };
const ScrollBar = ({ before, thumb, after, h, atEnd }: BarProps) => (
  <Bar $h={h}>
    <BarButton type="button" aria-label={h ? "Scroll left" : "Scroll up"}>
      <BarArrow dir={h ? "left" : "up"} dim={!atEnd} />
    </BarButton>
    <BarSpace $n={before} />
    <BarThumb $n={thumb} $h={h} />
    <BarSpace $n={after} />
    <BarButton type="button" aria-label={h ? "Scroll right" : "Scroll down"}>
      <BarArrow dir={h ? "right" : "down"} dim={atEnd} />
    </BarButton>
  </Bar>
);
const Define = ({ label, on }: { label: string; on?: boolean }) => (
  <DefineButton type="button" aria-label={label}>
    <svg width="23" height="17" viewBox="0 0 23 17" fill="none">
      <path d="M5 2.500V13L0 8Z" fill="#8a8a8a" />
      <path d="M5.500.5H17.500V15.500H5.500Z" fill={on ? "#fbee7e" : "#fafafa"} stroke={on ? "#c4a000" : "#808080"} />
      <path d="M5.500 7.500H17.500" stroke={on ? "#c4a000" : "#808080"} />
      <path d="M7.500 4H15.500" stroke="#444" strokeWidth="2" />
      <path d="M7.500 11.500H14.500" stroke="#444" />
      <path d="M15.500 12.500H22.500L19 16.500Z" fill="#8a8a8a" stroke="#666" strokeWidth=".8" />
    </svg>
  </DefineButton>
);
const Triangle = () => (
  <svg width="12" height="8" viewBox="0 0 12 8">
    <path d="M.5 1H11.500L6 7.500Z" fill="#333" />
  </svg>
);

const shield = "M3 1.500Q6.500 3 10 1.500Q13.500 3 17 1.500L18.500 5Q20 13 10 17Q0 13 1.500 5Z";
const pages: { label: string; art: React.ReactNode }[] = [
  { label: "Text", art: <Mini x="2" y="11">abc</Mini> },
  { label: "Formatting", art: <><path d="M1 5H6M3.500 2.500V7.500M6 11 2 13.500 6 16" stroke="#888" /><Mini x="9" y="7">ab</Mini><Mini x="14" y="17">c</Mini></> },
  { label: "Buffer", art: <><path d="M3 3.500Q6 1 8 3Q11 0 13 3Q19 2 19.500 8Q18 14 13 12.500Q10 15 7 12.500Q1 14 .5 8Q.5 5 3 3.500Z" fill="#a9bdf3" /><Mini x="2" y="11">abc</Mini></> },
  { label: "Background", art: <><path d={shield} fill="#0a6fc0" stroke="#333" /><path d="M3 1.500Q6.500 3 10 1.500Q13.500 3 17 1.500L18 4.500H2Z" fill="#e3202b" /></> },
  { label: "Shadow", art: <><path d={shield} fill="#555" transform="translate(1 1.500)" /><path d={shield} fill="#eaf0ff" stroke="#90a5dc" /></> },
  { label: "Placement", art: <g fill="#a58f8f" stroke="#7d6c6c" strokeWidth=".8"><path d="M10 .5 13.500 4H12V6.500H8V4H6.500Z" /><path d="M10 18.500 13.500 15H12V12.500H8V15H6.500Z" /><path d="M.5 9.500 4 6V7.500H6.500V11.500H4V13Z" /><path d="M19.500 9.500 16 6V7.500H13.500V11.500H16V13Z" /></g> },
  { label: "Rendering", art: <><path d="M18 2 9.500 13 7.500 11Z" fill="#bbb" stroke="#777" /><path d="M8 11 10.500 13.500Q8 18 1.500 18Q5 16 8 11Z" fill="#555" /></> },
];

const Epsilon = () => (
  <svg width="12" height="16" viewBox="0 0 12 16" fill="none">
    <path d="M9.500 4.500C8.500 2 3.500 2 3.500 4.800C3.500 6.500 5 7.300 7 7.300C4.500 7.300 2.500 8.500 2.500 10.300C2.500 13.500 8.500 13.500 10 10.800" stroke="#5e2d6b" strokeWidth="1.500" />
  </svg>
);

export default function App() {
  return (
    <Desktop>
      <Global />
      <MainWindow>
        <TitleBar>
          <WindowButton $tone="idle" aria-label="Close"><Glyph kind="x" /></WindowButton>
          <WindowButton $tone="idle" aria-label="Minimize"><Glyph kind="min" /></WindowButton>
          <WindowButton $tone="idle" aria-label="Maximize"><Glyph kind="max" /></WindowButton>
          <WindowTitle>QGIS d73c9d8 - Alaska</WindowTitle>
        </TitleBar>
        <ToolRow>
          <Grip />
          <Tools items={row1a} />
          <Grip $wide />
          <Tools items={row1b} />
        </ToolRow>
        <ToolRow>
          <Grip />
          <Tools items={[identify, runAction]} />
          <MenuArrow label="Actions" />
          <Tools items={[select]} />
          <MenuArrow label="Selection modes" />
          <Tools items={row2} />
          <MenuArrow label="Measure modes" />
          <Tools items={row2b} />
        </ToolRow>
        <ToolRow>
          <Grip />
          <ToolButton $size="split" aria-label="Current Edits">
            <Ico>
              <Pencil fill="#aaa" edge="#8c8c8c" dx={-3} />
              <Pencil fill="#aaa" edge="#8c8c8c" dx={4} />
            </Ico>
            <DownArrow color="#aaa" />
          </ToolButton>
          <Tools items={row3} />
          <Grip $wide />
        </ToolRow>
        <Workspace>
          <Dock>
            <DockTitle>
              <DockName>Layers</DockName>
              <TinyButton aria-label="Float">
                <svg width="12" height="12" viewBox="0 0 12 12" fill="none" stroke="#555"><rect x=".5" y=".5" width="11" height="11" rx="2" /><path d="M5 2.500H9.500V7H5ZM2.500 5H7V9.500H2.500Z" fill="#f2f1f0" /></svg>
              </TinyButton>
              <TinyButton aria-label="Close panel">
                <svg width="12" height="12" viewBox="0 0 12 12" fill="none" stroke="#555"><rect x=".5" y=".5" width="11" height="11" rx="2" /><path d="M3 3 9 9M9 3 3 9" strokeWidth="2" /></svg>
              </TinyButton>
            </DockTitle>
            <DockTools>
              <DockTool aria-label="Add Group"><GroupIcon /></DockTool>
              <DockTool $menu aria-label="Manage Visibility">
                <svg width="22" height="16" viewBox="0 0 22 16" fill="none"><path d="M1 8Q7 2 14 8Q7 12.500 1 8Z" fill="#fff" stroke="#999" /><circle cx="8" cy="7.500" r="3" fill="#5b87b8" /><circle cx="8" cy="7.500" r="1.200" fill="#234" /><path d="M1 5Q7 0 14 6" stroke="#bbb" /><path d="M14 9.500H21L17.500 14Z" fill="#777" /></svg>
              </DockTool>
              <DockTool aria-label="Filter">
                <Ico size={16}><path d="M1 1.500H15V4L10 9V14L6.500 15.500V9L1 4Z" fill="#3f9b4b" stroke="#2c7a38" /><path d="M3 3H12" stroke="#9ed6a5" strokeWidth="1.500" /></Ico>
              </DockTool>
              {["Expand All", "Collapse All"].map((n, i) => (
                <DockTool key={n} aria-label={n}>
                  <Ico size={16}><path d="M.5 1.500H15.500V14.500H.5Z" fill="#fff" stroke="#2f6fd0" /><path d="M.5 1H15.500V4H.5Z" fill="#2f6fd0" /><path d="M3.500 5V13M3.500 7H6M3.500 12H6" stroke="#999" /><path d="M6 6H10V9H6ZM6 10.500H10V13.500H6Z" fill="#f2a13c" /><path d={i ? "M12.500 4 16 8.500H13.800V14H11.200V8.500H9Z" : "M12.500 14 16 9.500H13.800V4H11.200V9.500H9Z"} fill="#f00c0c" /></Ico>
                </DockTool>
              ))}
              <DockTool aria-label="Remove Layer">
                <Ico size={16}><path d="M1.500 1.500H13.500V13.500H1.500Z" fill="#eee" stroke="#aaa" /><rect x="10" y="11" width="6" height="5" rx="1" fill="#e65a5a" /><path d="M11 13.500H15" stroke="#fff" /></Ico>
              </DockTool>
            </DockTools>
            <Tree>
              {layers.map((l) => (
                <TreeRow key={l.label} $child={l.child} $current={l.current}>
                  {!l.child && (
                    <Expander aria-label={`Toggle ${l.label}`}>
                      <svg width="10" height="10" viewBox="0 0 10 10"><path d={l.closed ? "M2.500 1V9L8.500 5Z" : "M1 2H9L5 8Z"} fill="#666" stroke="#444" strokeWidth=".8" /></svg>
                    </Expander>
                  )}
                  <CheckLabel>
                    <Check defaultChecked={l.state === "on"} $partial={l.state === "partial"} />
                    {l.child ? <Ico size={17}>{l.art}</Ico> : <GroupIcon />}
                    {l.label}
                  </CheckLabel>
                </TreeRow>
              ))}
            </Tree>
            <Tabs>
              <Tab $active>Lay…</Tab>
              <Tab>Layer or…</Tab>
              <Tab>Brow…</Tab>
            </Tabs>
          </Dock>
          <SideGrip />
          <MapView>
            <MapArt />
          </MapView>
        </Workspace>
        <StatusBar>
          <StatusButton aria-label="Toggle extents">
            <Ico size={16}><circle cx="5" cy="5" r="3.500" stroke="#222" strokeWidth="1.800" /><circle cx="10" cy="11" r="4" stroke="#222" strokeWidth="1.800" /><path d="M2 9 7 14M8 8 12 13M10 3 14 1M4 4 10 11" stroke="#222" strokeWidth="1.500" /></Ico>
          </StatusButton>
          <StatusLabel htmlFor="coord">Coordinate:</StatusLabel>
          <CoordInput id="coord" defaultValue="-197435,3224231" />
          <ScaleLabel htmlFor="scale">Scale</ScaleLabel>
          <Combo id="scale" $w={98} $h={18} defaultValue="a"><option value="a">1:501.296</option></Combo>
          <CheckLabel><Check defaultChecked />Render</CheckLabel>
          <Cell $w={79}>EPSG:2964</Cell>
          <StatusButton aria-label="CRS status">
            <Ico size={16}><circle cx="8" cy="8" r="6.500" fill="#555" stroke="#222" /><path d="M4 4 8 8 12 4M8 8V14" stroke="#ddd" /></Ico>
          </StatusButton>
          <StatusButton aria-label="Messages">
            <Ico size={16}><path d="M8 1.500 15 14H1Z" fill="#f0ecaa" stroke="#555" /><path d="M8 5.500V10M8 11.500V13" stroke="#333" strokeWidth="1.500" /></Ico>
          </StatusButton>
        </StatusBar>
        <DialogShade />
      </MainWindow>

      <DialogWindow role="dialog" aria-label="Layer labeling settings">
        <TitleBar $active>
          <WindowButton $tone="close" aria-label="Close"><Glyph kind="x" /></WindowButton>
          <WindowButton $tone="focus" aria-label="Maximize"><Glyph kind="max" /></WindowButton>
          <WindowTitle>Layer labeling settings</WindowTitle>
        </TitleBar>
        <DialogBody onSubmit={(e) => e.preventDefault()}>
          <TopRow>
            <EnableLabel><Check defaultChecked />Label this layer with</EnableLabel>
            <Combo aria-label="Label field" $w={122} $h={25} defaultValue="NAMES"><option>NAMES</option></Combo>
            <PushButton type="button" $w={20} aria-label="Expression"><Epsilon /></PushButton>
            <Spacer />
            <PushButton type="button" $w={44} aria-label="Automated placement settings">
              <svg width="22" height="16" viewBox="0 0 22 16" fill="none">
                <path d="M8 0 15.500 8 8 16 .5 8Z" fill="#3c6080" />
                <path d="M8 5V11M5 8H11" stroke="#fff" strokeWidth="2.500" />
                <path d="M4.500 4.500 6 6M11.500 4.500 10 6M4.500 11.500 6 10M11.500 11.500 10 10" stroke="#cfe0ee" strokeWidth="1.500" />
                <path d="M12 7.500H15V9.500H18V6H21.500V9H19.500V12H21.500V15.500H12.500V12.500H14.500V11H12Z" fill="#fce44e" stroke="#c9a10f" />
              </svg>
            </PushButton>
          </TopRow>
          <Heading type="button"><Triangle />Text/Buffer sample</Heading>
          <SampleRow>
            <Sample>Lorem Ipsum</Sample>
            <ScrollBar before={0} thumb={34} after={18} />
          </SampleRow>
          <SampleControls>
            <SampleInput aria-label="Sample text" defaultValue="Lorem Ipsum" />
            <PushButton type="button" $w={20} $h={20} aria-label="Reset sample text">
              <Ico size={16}><path d="M6 2.500 2 6.500 6 10.500V8H10Q12 8 12 10Q12 12 9 12.500V14Q14 13.500 14 9.500Q14 5 10 5H6Z" fill="#8cc08c" stroke="#5c9a63" /></Ico>
            </PushButton>
            <SliderHolder><Slider aria-label="Sample size" defaultValue={5} $fill={5} $soft /></SliderHolder>
            <PushButton type="button" $w={78} aria-label="Sample background color"><Swatch /></PushButton>
            <PushButton type="button" $w={18} aria-label="Color options"><DownArrow /></PushButton>
          </SampleControls>
          <Splitter />
          <Split>
            <PageList>
              {pages.map((p) => (
                <PageItem key={p.label} $current={p.label === "Placement"}>
                  <Ico size={20}>{p.art}</Ico>
                  {p.label}
                </PageItem>
              ))}
            </PageList>
            <SideGrip />
            <Panel>
              <PanelTitle>Placement</PanelTitle>
              <ScrollArea>
                <Viewport>
                  <Scrolled>
                    <ClippedRow>
                      <WideCombo aria-label="Quadrant" />
                      <svg width="18" height="5" viewBox="0 0 18 5"><path d="M0 .5H16M13 .5 15 2" stroke="#666" fill="none" /></svg>
                    </ClippedRow>
                    <FieldRow>
                      <FieldLabel htmlFor="rotation">Rotation</FieldLabel>
                      <SpinBox>
                        <SpinInput id="rotation" defaultValue="0.00˚" />
                        <SpinButtons>
                          <SpinButton type="button" aria-label="Increase"><BarArrow dir="up" /></SpinButton>
                          <SpinButton type="button" aria-label="Decrease"><BarArrow dir="down" /></SpinButton>
                        </SpinButtons>
                      </SpinBox>
                    </FieldRow>
                    <Rule />
                    <Heading type="button" $space><Triangle />Data defined</Heading>
                    <OptionRow>
                      <Cell $w={74}>Coordinate</Cell>
                      <Cell $w={11}>X</Cell>
                      <Define label="Define X" on />
                      <Cell $w={11}>Y</Cell>
                      <Define label="Define Y" on />
                    </OptionRow>
                    <OptionRow>
                      <Cell $w={74}>Alignment</Cell>
                      <Cell $w={69}>horizontal</Cell>
                      <Define label="Define horizontal alignment" />
                      <Cell $w={52}>vertical</Cell>
                      <Define label="Define vertical alignment" />
                    </OptionRow>
                    <OptionRow>
                      <Cell $w={76}>Rotation</Cell>
                      <Define label="Define rotation" on />
                      <Cell $w={6} />
                      <CheckLabel><Check defaultChecked />Preserve data rotation values</CheckLabel>
                    </OptionRow>
                    <Heading type="button" $space><Triangle />Priority</Heading>
                    <SliderRow>
                      <Cell $w={30}>Low</Cell>
                      <SliderCell><Slider aria-label="Priority" min={0} max={10} defaultValue={5} $fill={50} /></SliderCell>
                      <Cell $w={40}>High</Cell>
                    </SliderRow>
                    <Ticks>
                      {Array.from({ length: 11 }, (_, i) => <Tick key={i} />)}
                    </Ticks>
                  </Scrolled>
                </Viewport>
                <ScrollBar before={130} thumb={121} after={0} atEnd />
                <ScrollBar h before={0} thumb={348} after={5} />
              </ScrollArea>
            </Panel>
          </Split>
          <Buttons>
            <PushButton type="button" $w={83}>Apply</PushButton>
            <PushButton type="button" $w={83}><span><Mnemonic>C</Mnemonic>ancel</span></PushButton>
            <PushButton type="submit" $w={83} $primary><span><Mnemonic>O</Mnemonic>K</span></PushButton>
          </Buttons>
        </DialogBody>
      </DialogWindow>
    </Desktop>
  );
}
